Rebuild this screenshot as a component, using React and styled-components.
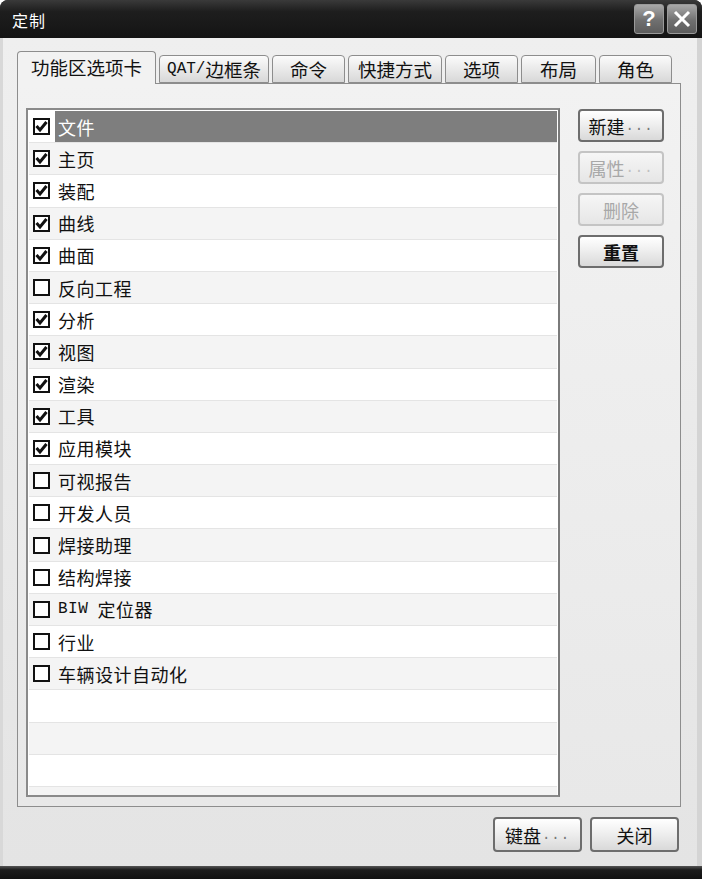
import React from "react";
import styled, { createGlobalStyle } from "styled-components";

const Global = createGlobalStyle`
  html, body { margin: 0; padding: 0; background: #fff; }
  body { font-family: "Noto Sans CJK SC", "Liberation Sans", sans-serif; }
`;

const Window = styled.div`
  width: 702px;
  height: 879px;
  display: flex;
  flex-direction: column;
  background: #1a1a1a;
  border-radius: 8px 8px 0 0;
  overflow: hidden;
`;

const TitleBar = styled.div`
  height: 38px;
  flex: 0 0 auto;
  display: flex;
  align-items: center;
  padding: 0 5px 0 12px;
  background: linear-gradient(#3a3a3a 0%, #1e1e1e 30%, #141414 100%);
  color: #fff;
  font-size: 16px;
`;

const Title = styled.div`
  flex: 1;
  letter-spacing: 1px;
  margin-top: 2px;
`;

const CapButton = styled.div`
  width: 28px;
  height: 28px;
  margin-left: 3px;
  border: 1px solid #9a9a9a;
  border-radius: 3px;
  background: linear-gradient(#a8a8a8, #707070 55%, #5c5c5c);
  display: flex;
  align-items: center;
  justify-content: center;
  color: #fff;
  font: bold 22px "Liberation Sans", sans-serif;
`;

const Body = styled.div`
  flex: 1;
  display: flex;
  flex-direction: column;
  background: linear-gradient(#efefef, #e4e4e4);
  border-left: 3px solid #d8d8d8;
  border-right: 5px solid #d4d4d4;
  padding: 12px 16px 0 14px;
`;

const Tabs = styled.div`
  display: flex;
  align-items: flex-end;
  height: 33px;
  gap: 3px;
  position: relative;
  z-index: 1;
`;

const Tab = styled.div`
  width: ${(p) => p.$w}px;
  height: ${(p) => (p.$active ? 33 : 28)}px;
  box-sizing: border-box;
  border: 1px solid #8d8d8d;
  border-bottom: ${(p) => (p.$active ? "none" : "1px solid #8d8d8d")};
  border-radius: 4px 4px 0 0;
  background: ${(p) =>
    p.$active ? "#f2f2f2" : "linear-gradient(#fbfbfb, #e6e6e6 60%, #d8d8d8)"};
  display: flex;
  align-items: center;
  justify-content: center;
  font-size: 18.5px;
  color: #111;
  margin-bottom: ${(p) => (p.$active ? -1 : 0)}px;
  padding-bottom: ${(p) => (p.$active ? 2 : 0)}px;
  white-space: nowrap;
`;

const Mono = styled.span`
  font-family: "Liberation Mono", monospace;
  font-size: 16px;
`;

const Panel = styled.div`
  height: 724px;
  box-sizing: border-box;
  border: 1px solid #8d8d8d;
  background: linear-gradient(#f2f2f2, #e8e8e8);
  display: flex;
  gap: 18px;
  padding: 24px 16px 9px 8px;
`;

const ListBox = styled.div`
  width: 534px;
  box-sizing: border-box;
  border: 2px solid #8a8a8a;
  border-right-color: #7a7a7a;
  background: #fff;
  padding: 1px 1px 0 1px;
  overflow: hidden;
`;

const Row = styled.div`
  height: 32.2px;
  box-sizing: border-box;
  display: flex;
  align-items: center;
  padding-left: 4px;
  background: ${(p) => (p.$odd ? "#f4f4f4" : "#fff")};
  border-bottom: 1px solid #e4e4e4;
`;

const Label = styled.div`
  flex: 1;
  height: 100%;
  display: flex;
  align-items: center;
  margin-left: 5px;
  padding-left: 3px;
  font-size: 18px;
  letter-spacing: 0.5px;
  color: ${(p) => (p.$selected ? "#fff" : "#111")};
  background: ${(p) => (p.$selected ? "#7e7e7e" : "transparent")};
`;

const Side = styled.div`
  display: flex;
  flex-direction: column;
  gap: 9px;
  padding-top: 1px;
`;

const Button = styled.div`
  width: ${(p) => p.$w || 86}px;
  height: ${(p) => p.$h || 33}px;
  box-sizing: border-box;
  border: 2px solid ${(p) => (p.$disabled ? "#c4c4c4" : "#6d6d6d")};
  border-radius: 4px;
  background: ${(p) =>
    p.$disabled
      ? "linear-gradient(#f6f6f6, #e6e6e6)"
      : "linear-gradient(#ffffff, #efefef 45%, #d9d9d9)"};
  display: flex;
  align-items: center;
  justify-content: center;
  font-size: 18px;
  color: ${(p) => (p.$disabled ? "#a8a8a8" : "#111")};
  ${(p) => (p.$bold ? "font-weight: bold;" : "")}
`;

const Dots = styled.span`
  font-family: "Liberation Mono", monospace;
  font-size: 14px;
  color: ${(p) => (p.$disabled ? "#c0c0c0" : "#777")};
  letter-spacing: 1px;
  margin-left: 1px;
`;

const Footer = styled.div`
  display: flex;
  justify-content: flex-end;
  gap: 8px;
  padding: 10px 0 0 0;
  margin-right: 2px;
`;

const BottomEdge = styled.div`
  height: 13px;
  flex: 0 0 auto;
  background: linear-gradient(#555, #1c1c1c 30%, #111);
`;

function CheckBox({ checked }) {
  return (
    <svg width="17" height="17" viewBox="0 0 17 17">
      <rect x="1" y="1" width="15" height="15" fill="#fff" stroke="#111" strokeWidth="2" />
      {checked && (
        <path d="M3.5 8 L7 12 L13.5 4" fill="none" stroke="#111" strokeWidth="3" strokeLinejoin="miter" />
      )}
    </svg>
  );
}

const items = [
  ["文件", true],
  ["主页", true],
  ["装配", true],
  ["曲线", true],
  ["曲面", true],
  ["反向工程", false],
  ["分析", true],
  ["视图", true],
  ["渲染", true],
  ["工具", true],
  ["应用模块", true],
  ["可视报告", false],
  ["开发人员", false],
  ["焊接助理", false],
  ["结构焊接", false],
  ["BIW 定位器", false],
  ["行业", false],
  ["车辆设计自动化", false],
];

const tabs = [
  ["功能区选项卡", 139],
  ["QAT/边框条", 110],
  ["命令", 73],
  ["快捷方式", 94],
  ["选项", 73],
  ["布局", 75],
  ["角色", 73],
];

function renderLabel(text) {
  if (text.startsWith("BIW")) {
    return (
      <>
        <Mono>BIW</Mono>&nbsp;&nbsp;定位器
      </>
    );
  }
  return text;
}

export default function App() {
  return (
    <>
      <Global />
      <Window>
        <TitleBar>
          <Title>定制</Title>
          <CapButton>?</CapButton>
          <CapButton>
            <svg width="20" height="20" viewBox="0 0 20 20">
              <path d="M3 3 L17 17 M17 3 L3 17" stroke="#fff" strokeWidth="3" />
            </svg>
          </CapButton>
        </TitleBar>
        <Body>
          <Tabs>
            {tabs.map(([t, w], i) => (
              <Tab key={t} $w={w} $active={i === 0}>
                {t.startsWith("QAT") ? (
                  <>
                    <Mono>QAT/</Mono>边框条
                  </>
                ) : (
                  t
                )}
              </Tab>
            ))}
          </Tabs>
          <Panel>
            <ListBox>
              {items.map(([t, c], i) => (
                <Row key={t} $odd={i % 2 === 1}>
                  <CheckBox checked={c} />
                  <Label $selected={i === 0}>{renderLabel(t)}</Label>
                </Row>
              ))}
              {[18, 19, 20, 21].map((i) => (
                <Row key={i} $odd={i % 2 === 1} />
              ))}
            </ListBox>
            <Side>
              <Button>新建<Dots>...</Dots></Button>
              <Button $disabled>属性<Dots $disabled>...</Dots></Button>
              <Button $disabled>删除</Button>
              <Button $bold>重置</Button>
            </Side>
          </Panel>
          <Footer>
            <Button $w={89} $h={35}>键盘<Dots>...</Dots></Button>
            <Button $w={89} $h={35}>关闭</Button>
          </Footer>
        </Body>
        <BottomEdge />
      </Window>
    </>
  );
}
